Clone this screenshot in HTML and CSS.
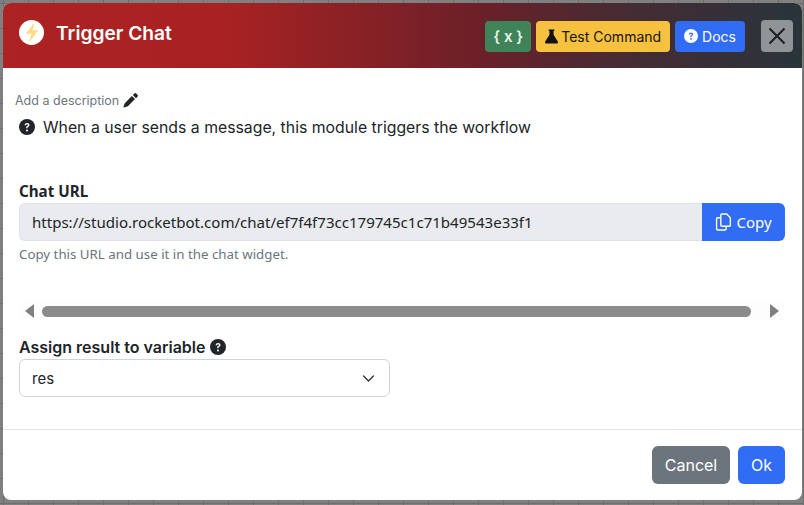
FILE: index.html
```html
<!DOCTYPE html>
<html lang="en">
<head>
    <meta charset="UTF-8">
    <title>Trigger Chat</title>
    <link rel="stylesheet" href="styles.css">
</head>
<body>
    <div class="modal">
        <!-- Header -->
        <div class="modal-header">
            <div class="title-group">
                <div class="bolt-circle">
                    <svg width="18" height="23" viewBox="0 0 16 20"><path d="M10.500 0.500 L2.500 11 H7.500 L5 19.500 L13.500 8 H8.500 Z" fill="#fcdc85"/></svg>
                </div>
                <h1 class="modal-title">Trigger Chat</h1>
            </div>
            <div class="header-actions">
                <button class="btn btn-green">{ x }</button>
                <button class="btn btn-yellow">
                    <svg width="15" height="15" viewBox="0 0 16 16"><path d="M5 .5h6v1.500h-.8v4l4.500 7.200c.6 1-.1 2.300-1.300 2.300H2.600c-1.200 0-1.900-1.300-1.300-2.300L5.800 6V2H5z" fill="#111"/></svg>
                    Test Command
                </button>
                <button class="btn btn-blue">
                    <svg width="14" height="14" viewBox="0 0 16 16"><circle cx="8" cy="8" r="8" fill="#fff"/><path d="M5.600 6.200C5.700 4.800 6.700 4 8.100 4c1.400 0 2.400.9 2.400 2 0 .9-.5 1.400-1.200 1.800-.6.400-.8.600-.8 1.200v.3H7.100V9c0-1 .4-1.500 1.100-1.900.5-.3.800-.6.800-1 0-.5-.4-.8-.9-.8-.6 0-1 .4-1 .9zM8 10.400a1 1 0 1 1 0 2 1 1 0 0 1 0-2z" fill="#316cf4"/></svg>
                    Docs
                </button>
            </div>
            <button class="btn-close">
                <svg width="18" height="18" viewBox="0 0 18 18"><path d="M1.500 1.500 L16.500 16.500 M16.500 1.500 L1.500 16.500" stroke="#1c1f22" stroke-width="2" fill="none"/></svg>
            </button>
        </div>

        <!-- Body -->
        <div class="modal-body">
            <div class="add-desc">
                Add a description
                <svg width="15" height="15" viewBox="0 0 16 16"><path d="M12.100.600a1.500 1.500 0 0 1 2.100 0l1.200 1.200a1.500 1.500 0 0 1 0 2.100L13.800 5.500 10.500 2.200zM9.500 3.200l3.300 3.300L5.200 14.100 1 15.500c-.4.100-.7-.2-.6-.6L1.900 10.800z" fill="#212529"/></svg>
            </div>
            <div class="module-help">
                <svg width="16" height="16" viewBox="0 0 16 16"><circle cx="8" cy="8" r="8" fill="#212529"/><path d="M5.600 6.200C5.700 4.800 6.700 4 8.100 4c1.400 0 2.400.9 2.400 2 0 .9-.5 1.400-1.200 1.800-.6.400-.8.600-.8 1.200v.3H7.100V9c0-1 .4-1.500 1.100-1.900.5-.3.800-.6.800-1 0-.5-.4-.8-.9-.8-.6 0-1 .4-1 .9zM8 10.400a1 1 0 1 1 0 2 1 1 0 0 1 0-2z" fill="#fff"/></svg>
                When a user sends a message, this module triggers the workflow
            </div>

            <label class="url-label">Chat URL</label>
            <div class="input-group">
                <div class="url-value">https://studio.rocketbot.com/chat/ef7f4f73cc179745c1c71b49543e33f1</div>
                <button class="btn-copy">
                    <svg width="18" height="18" viewBox="0 0 17 17" fill="none" stroke="#fff" stroke-width="1.300"><path d="M6.500 1h4.500l3.500 3.500V11.500a1 1 0 0 1-1 1h-7a1 1 0 0 1-1-1V2a1 1 0 0 1 1-1z"/><path d="M5 4.500H2.500a1 1 0 0 0-1 1V15a1 1 0 0 0 1 1h7a1 1 0 0 0 1-1v-2.500"/></svg>
                    Copy
                </button>
            </div>
            <div class="form-text">Copy this URL and use it in the chat widget.</div>

            <div class="scrollbar">
                <span class="arrow arrow-left"></span>
                <div class="scroll-thumb"></div>
                <span class="arrow arrow-right"></span>
            </div>

            <label class="field-label">
                Assign result to variable
                <svg width="16" height="16" viewBox="0 0 16 16"><circle cx="8" cy="8" r="8" fill="#212529"/><path d="M5.600 6.200C5.700 4.800 6.700 4 8.100 4c1.400 0 2.400.9 2.400 2 0 .9-.5 1.400-1.200 1.800-.6.400-.8.600-.8 1.200v.3H7.100V9c0-1 .4-1.500 1.100-1.900.5-.3.800-.6.800-1 0-.5-.4-.8-.9-.8-.6 0-1 .4-1 .9zM8 10.400a1 1 0 1 1 0 2 1 1 0 0 1 0-2z" fill="#fff"/></svg>
            </label>
            <div class="select-box">
                res
                <svg width="13" height="13" viewBox="0 0 16 16"><path d="M2 5l6 6 6-6" fill="none" stroke="#343a40" stroke-width="1.800" stroke-linecap="round" stroke-linejoin="round"/></svg>
            </div>
        </div>

        <!-- Footer -->
        <div class="modal-footer">
            <button class="btn-lg btn-gray">Cancel</button>
            <button class="btn-lg btn-primary">Ok</button>
        </div>
    </div>
</body>
</html>
```

FILE: styles.css
```css
/* page behind the modal */
html, body {
    height: 100%;
}
body {
    margin: 0;
    padding: 3px 2px 5px 3px;
    box-sizing: border-box;
    background-color: #808080;
    background-image:
        linear-gradient(90deg, #6e6e6e 1px, transparent 1px),
        linear-gradient(#6e6e6e 1px, transparent 1px);
    background-size: 25px 25px;
    background-position: 3px 3px;
    font-family: 'Inter', sans-serif;
    color: #212529;
    font-size: 16px;
    overflow: hidden;
}
button {
    font-family: inherit;
    border: none;
    cursor: pointer;
}

.modal {
    height: 497px;
    background-color: #fff;
    border-radius: 8px;
    overflow: hidden;
    display: flex;
    flex-direction: column;
}

/* header */
.modal-header {
    height: 65px;
    flex-shrink: 0;
    display: flex;
    align-items: center;
    padding: 0 9px 0 16px;
    background: linear-gradient(90deg, #ad2222 0%, #a82222 28%, #6b2029 60%, #4a2a32 75%, #29343b 100%);
}
.title-group {
    display: flex;
    align-items: center;
    margin-bottom: 7px;
}
.bolt-circle {
    width: 25px;
    height: 25px;
    border-radius: 50%;
    background-color: #fff;
    display: flex;
    align-items: center;
    justify-content: center;
}
.modal-title {
    margin: 2px 0 0 12px;
    font-size: 19.200px;
    font-weight: 600;
    color: #fff;
}
.header-actions {
    margin-left: auto;
    margin-top: 1px;
    display: flex;
    gap: 5px;
}
.btn {
    height: 31px;
    padding: 0 9px;
    border-radius: 4px;
    font-size: 14px;
    white-space: nowrap;
    display: flex;
    align-items: center;
    gap: 4px;
}
.btn-green {
    width: 46px;
    padding: 0;
    justify-content: center;
    background-color: #3f8459;
    color: #e8f3ec;
    font-size: 15px;
    font-weight: 600;
}
.btn-yellow {
    padding: 0 9px 0 8px;
    gap: 2px;
    background-color: #f7c140;
    color: #16130a;
}
.btn-blue {
    background-color: #316cf4;
    color: #fff;
}
.btn-close {
    width: 32px;
    height: 32px;
    margin-left: 16px;
    margin-top: 1px;
    border-radius: 4px;
    background-color: #8f9496;
    display: flex;
    align-items: center;
    justify-content: center;
    padding: 0;
}

/* body */
.modal-body {
    flex: 1;
    padding: 23px 17px 0 16px;
}
.add-desc {
    font-size: 12.500px;
    color: #6c757d;
    margin-left: -4px;
    display: flex;
    align-items: center;
    gap: 4px;
    height: 18px;
}
.module-help {
    display: flex;
    align-items: center;
    gap: 8px;
    font-size: 15.800px;
    margin-top: 7px;
    height: 22px;
}
.field-label {
    display: flex;
    align-items: center;
    gap: 4px;
    font-size: 16px;
    font-weight: 600;
    margin-top: 16px;
    height: 22px;
}
.url-label {
    display: block;
    font-family: 'Noto Sans', sans-serif;
    font-size: 15.200px;
    font-weight: 700;
    margin-top: 43px;
    height: 20px;
    line-height: 20px;
}
.input-group {
    display: flex;
    height: 38px;
    margin-top: 2px;
}
.url-value {
    flex: 1;
    background-color: #e9ebef;
    border: 1px solid #dee2e6;
    border-right: none;
    border-radius: 6px 0 0 6px;
    padding: 0 12px;
    display: flex;
    align-items: center;
    font-family: 'Noto Sans', sans-serif;
    font-size: 15.050px;
}
.btn-copy {
    width: 83px;
    background-color: #316cf4;
    color: #fff;
    border-radius: 0 6px 6px 0;
    font-family: 'Noto Sans', sans-serif;
    font-size: 15px;
    display: flex;
    align-items: center;
    justify-content: center;
    gap: 3px;
    padding: 0;
}
.form-text {
    font-family: 'Noto Sans', sans-serif;
    font-size: 13.300px;
    color: #6c757d;
    margin-top: 4px;
}

/* fake horizontal scrollbar */
.scrollbar {
    display: flex;
    align-items: center;
    height: 18px;
    margin-top: 39px;
    background-color: #fdfdfd;
    padding: 0 6px;
}
.scroll-thumb {
    flex: 1;
    height: 11px;
    margin: 0 19px 0 8px;
    border-radius: 6px;
    background-color: #8b8b8b;
}
.arrow {
    width: 0;
    height: 0;
    border-top: 7px solid transparent;
    border-bottom: 7px solid transparent;
}
.arrow-left {
    border-right: 9px solid #808080;
}
.arrow-right {
    border-left: 9px solid #808080;
}
.select-box {
    width: 371px;
    height: 38px;
    box-sizing: border-box;
    border: 1px solid #ced4da;
    border-radius: 6px;
    padding: 0 14px 0 12px;
    margin-top: 1px;
    display: flex;
    align-items: center;
    justify-content: space-between;
    font-size: 15px;
}

/* footer */
.modal-footer {
    height: 71px;
    flex-shrink: 0;
    box-sizing: border-box;
    border-top: 1px solid #dee2e6;
    display: flex;
    justify-content: flex-end;
    align-items: center;
    gap: 8px;
    padding: 0 17px 0 0;
}
.btn-lg {
    height: 38px;
    border-radius: 6px;
    font-size: 16px;
    color: #fff;
    padding: 0;
}
.btn-gray {
    width: 78px;
    background-color: #6c757d;
}
.btn-primary {
    width: 47px;
    background-color: #316cf4;
}
```
